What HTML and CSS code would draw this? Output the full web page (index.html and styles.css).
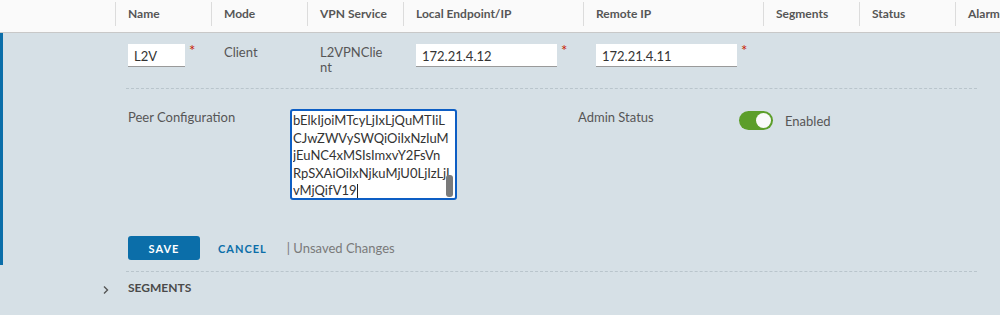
FILE: index.html
```html
<!DOCTYPE html>
<html lang="en">
<head>
    <meta charset="UTF-8">
    <title>L2VPN Session</title>
    <link rel="stylesheet" href="styles.css">
</head>
<body>
    <div class="grid-header">
        <div class="th th-first"></div>
        <div class="th">Name</div>
        <div class="th">Mode</div>
        <div class="th">VPN Service</div>
        <div class="th">Local Endpoint/IP</div>
        <div class="th">Remote IP</div>
        <div class="th">Segments</div>
        <div class="th">Status</div>
        <div class="th">Alarms</div>
    </div>

    <div class="row-expanded">
        <div class="row-cells">
            <div class="td"></div>
            <div class="td">
                <span class="field"><input class="input input-name" value="L2V"><span class="req">*</span></span>
            </div>
            <div class="td text">Client</div>
            <div class="td text"><span class="wrap">L2VPNClient</span></div>
            <div class="td">
                <span class="field"><input class="input input-ip" value="172.21.4.12"><span class="req">*</span></span>
            </div>
            <div class="td">
                <span class="field"><input class="input input-ip" value="172.21.4.11"><span class="req">*</span></span>
            </div>
            <div class="td"></div>
            <div class="td"></div>
            <div class="td"></div>
        </div>

        <div class="details">
            <div class="detail-grid">
                <label class="detail-label">Peer Configuration</label>
                <div class="fake-textarea">
                    <div class="ta-line">bElkIjoiMTcyLjIxLjQuMTIiL</div>
                    <div class="ta-line">CJwZWVySWQiOiIxNzIuM</div>
                    <div class="ta-line">jEuNC4xMSIsImxvY2FsVn</div>
                    <div class="ta-line">RpSXAiOiIxNjkuMjU0LjIzLjI</div>
                    <div class="ta-line">vMjQifV19<span class="caret"></span></div>
                    <div class="ta-thumb"></div>
                </div>
                <div></div>
                <label class="detail-label">Admin Status</label>
                <div class="toggle-wrap">
                    <span class="toggle"><span class="knob"></span></span>
                    <span class="toggle-text">Enabled</span>
                </div>
            </div>

            <div class="actions">
                <button class="btn-save">SAVE</button>
                <button class="btn-link">CANCEL</button>
                <span class="unsaved">| Unsaved Changes</span>
            </div>
        </div>
    </div>

    <div class="segments">
        <div class="segments-head">
            <svg class="chevron" width="8" height="10" viewBox="0 0 8 10"><path d="M2 1.5 L5.5 5 L2 8.5" fill="none" stroke="#555" stroke-width="1.4"/></svg>
            <span class="segments-title">SEGMENTS</span>
        </div>
    </div>
</body>
</html>
```

FILE: styles.css
```css
:root {
    --bg: #d6e0e6;
    --header-bg: #fafafa;
    --text: #565656;
    --dark: #333;
    --blue: #0b6ea9;
    --green: #5c9e2a;
    --red: #c92100;
    --dash: #b9c5cc;
}
body {
    margin: 0;
    background-color: var(--bg);
    font-family: Lato, "Liberation Sans", sans-serif;
    font-size: 13px;
    color: var(--text);
    overflow: hidden;
    width: 1000px;
    height: 315px;
}
.grid-header, .row-cells {
    display: grid;
    grid-template-columns: 115px 96px 96px 96px 180px 180px 96px 96px 96px;
}
.grid-header {
    height: 32px;
    background-color: var(--header-bg);
    border-bottom: 1px solid #c8c8c8;
    overflow: hidden;
}
.th {
    margin-top: 2px;
    height: 24px;
    line-height: 24px;
    padding-left: 12px;
    border-left: 1px solid #dcdcdc;
    font-size: 12px;
    font-weight: 700;
    color: var(--text);
    white-space: nowrap;
}
.th-first { border-left: none; }

.row-expanded { border-left: 3px solid var(--blue); padding-bottom: 5px; }
.row-cells {
    grid-template-columns: 112px 96px 96px 96px 180px 180px 96px 96px 96px;
    padding-top: 11px;
    height: 44px;
}
.td { padding-left: 13px; }
.td.text { padding-top: 1px; line-height: 15px; }
.wrap { display: block; width: 68px; word-break: break-all; }
.field { display: inline-flex; align-items: flex-start; }
.input {
    height: 23px;
    box-sizing: border-box;
    border: none;
    border-bottom: 1px solid #9a9a9a;
    background: #fff;
    font-family: inherit;
    font-size: 13px;
    color: var(--dark);
    padding: 2px 6px 0;
    outline: none;
}
.input-name { width: 57px; }
.input-ip { width: 141px; }
.req { color: var(--red); font-size: 15px; margin-left: 4px; line-height: 12px; }

.details {
    margin-left: 123px;
    width: 851px;
    border-top: 1px dashed var(--dash);
    padding: 20px 0 0 2px;
    box-sizing: border-box;
}
.detail-grid {
    display: grid;
    grid-template-columns: 162px 167px 121px 161px auto;
    align-items: start;
}
.detail-label { line-height: 16px; color: var(--text); }
.fake-textarea {
    position: relative;
    height: 91px;
    box-sizing: border-box;
    border: 2px solid #0d5ec4;
    border-radius: 3px;
    background: #fff;
    padding: 1px 0 0 1px;
    overflow: hidden;
    color: var(--dark);
}
.ta-line { height: 17.5px; line-height: 17.5px; white-space: nowrap; overflow: hidden; width: 160px; }
.caret { display: inline-block; width: 1px; height: 14px; background: #222; vertical-align: -3px; }
.ta-thumb {
    position: absolute;
    right: 2px;
    top: 64px;
    width: 7px;
    height: 22px;
    border-radius: 3px;
    background: #7a7a7a;
}
.toggle-wrap { display: flex; align-items: center; gap: 12px; margin-top: 2px; }
.toggle {
    width: 34px;
    height: 19px;
    box-sizing: border-box;
    border-radius: 10px;
    background: var(--green);
    display: flex;
    justify-content: flex-end;
    align-items: center;
    padding-right: 2px;
}
.knob { width: 15px; height: 15px; border-radius: 50%; background: #fafafa; }
.toggle-text { color: var(--text); }

.actions { display: flex; align-items: center; margin-top: 36px; }
.btn-save, .btn-link {
    font-family: inherit;
    font-size: 11px;
    font-weight: 700;
    letter-spacing: 1px;
    border: none;
    cursor: pointer;
}
.btn-save {
    width: 72px;
    height: 24px;
    border-radius: 3px;
    background: var(--blue);
    color: #fff;
}
.btn-link { background: none; color: var(--blue); margin-left: 18px; padding: 0; }
.unsaved { margin-left: 20px; color: #7a7a7a; }

.segments { padding-top: 6px; }
.segments-head {
    margin-left: 126px;
    width: 851px;
    border-top: 1px dashed var(--dash);
    height: 30px;
    display: flex;
    align-items: center;
    position: relative;
}
.chevron { position: absolute; left: -24px; top: 13px; }
.segments-title { margin-left: 2px; font-size: 12px; font-weight: 700; color: #4a4a4a; }
```
